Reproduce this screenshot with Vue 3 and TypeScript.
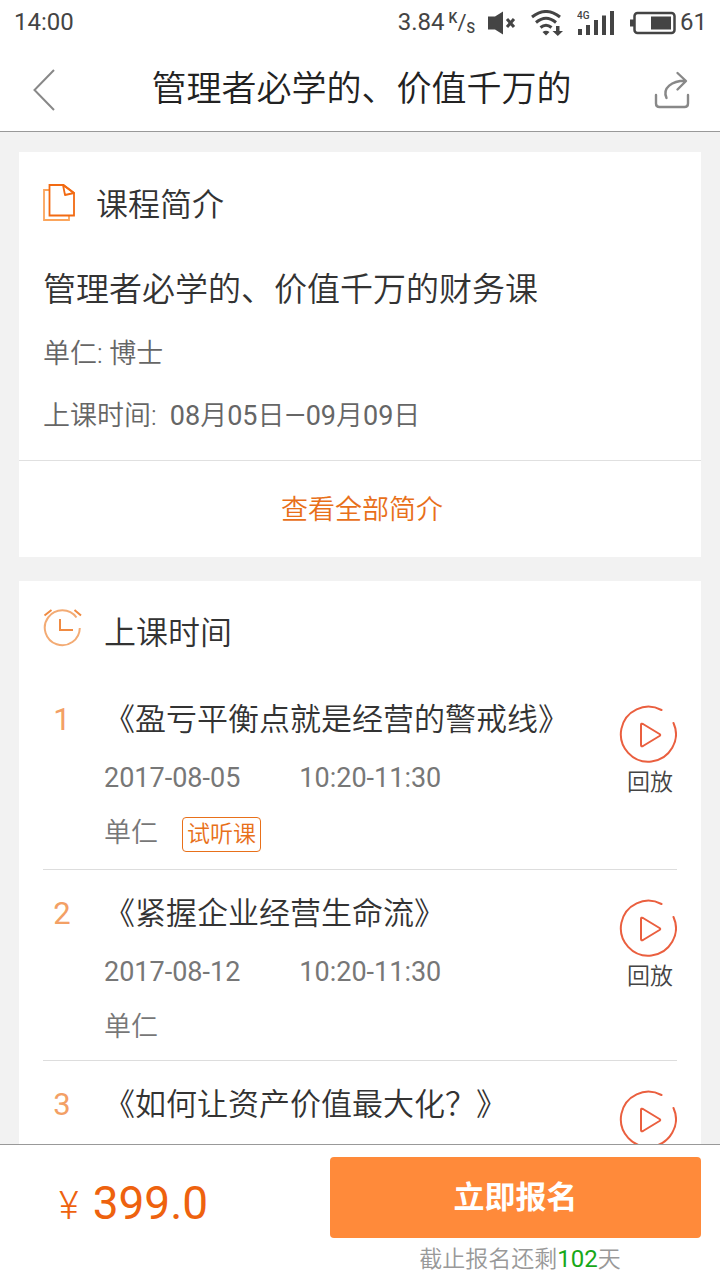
<script setup lang="ts">
interface Lesson {
  id: number
  title: string
  date?: string
  time?: string
  teacher?: string
  trial?: boolean
}

const lessons: Lesson[] = [
  { id: 1, title: '《盈亏平衡点就是经营的警戒线》', date: '2017-08-05', time: '10:20-11:30', teacher: '单仁', trial: true },
  { id: 2, title: '《紧握企业经营生命流》', date: '2017-08-12', time: '10:20-11:30', teacher: '单仁' },
  { id: 3, title: '《如何让资产价值最大化？》' },
]
</script>

<template>
  <div class="screen">
    <div class="status">
      <span>14:00</span>
      <div class="status-right">
        <span>3.84</span>
        <span class="unit"><sup>K</sup><i>/</i><sub>S</sub></span>
        <svg class="mute" width="28" height="24" viewBox="0 0 28 24">
          <path d="M0 5.500h7l8-5v23l-8-5H0z" fill="#444" />
          <path d="M19 8l7 8M26 8l-7 8" stroke="#444" stroke-width="3" />
        </svg>
        <svg class="wifi" width="32" height="26" viewBox="0 0 32 26" fill="none" stroke="#444" stroke-width="3">
          <path d="M1 7q14-11 28 0M5 12.500q10-8.500 20 0M9.500 17.500q5.500-4.500 11 0" />
          <path d="M11.500 22q3.500-2.500 7 0L15 25.500z" fill="#444" stroke="none" />
          <path d="M25 16h3.500v5H32l-5.200 5-5.300-5H25z" fill="#444" stroke="none" />
        </svg>
        <svg class="signal" width="38" height="24" viewBox="0 0 38 24" fill="#444">
          <text x="0" y="8" font-size="10" font-weight="500">4G</text>
          <path d="M1 18h4v6H1zM9 14h4v10H9zM17 9h4v15h-4zM25 4.500h4V24h-4zM33 0h4v24h-4z" />
        </svg>
        <svg class="battery" width="47" height="24" viewBox="0 0 47 24">
          <rect x="4.500" y="2" width="40" height="20" rx="3" fill="none" stroke="#444" stroke-width="2.500" />
          <path d="M0 8.500h4v7H0zM21 5.500h20v13H21z" fill="#444" />
        </svg>
        <span>61</span>
      </div>
    </div>

    <header class="bar">
      <button class="icon-button" type="button" aria-label="返回">
        <svg width="22" height="42" viewBox="0 0 22 42" fill="none" stroke="#888" stroke-width="2">
          <path d="M21 1L1.500 21 21 41" />
        </svg>
      </button>
      <h1>管理者必学的、价值千万的</h1>
      <button class="icon-button" type="button" aria-label="分享">
        <svg width="36" height="38" viewBox="0 0 36 38" fill="none" stroke="#888" stroke-width="2.400" stroke-linecap="round" stroke-linejoin="round">
          <path d="M2 24v8.500q0 3.500 3.500 3.500h25q3.500 0 3.500-3.500V24" />
          <path d="M12.500 27C8 17 18 9.800 31 9.800M23.500 2l8.500 8-8.500 8.500" />
        </svg>
      </button>
    </header>

    <main>
      <section class="card">
        <div class="card-head">
          <svg width="33" height="38" viewBox="0 0 33 38" fill="none" stroke-width="1.800">
            <path d="M6 6H1v30h25v-4.500" stroke="#fba55c" />
            <path d="M6.500 1h14L31 9v22.500H6.500z" stroke="#f26a12" />
            <path d="M20 1l2 10 9-2z" stroke="#f26a12" stroke-linejoin="round" />
          </svg>
          <h2>课程简介</h2>
        </div>
        <h3>管理者必学的、价值千万的财务课</h3>
        <p>单仁: 博士</p>
        <p>上课时间:&nbsp; <b>08</b>月<b>05</b>日<b>—09</b>月<b>09</b>日</p>
        <a class="more" href="#intro">查看全部简介</a>
      </section>

      <section class="card">
        <div class="card-head times">
          <svg width="40" height="40" viewBox="0 0 40 40" fill="none" stroke="#f3ab74" stroke-width="2">
            <path d="M33.500 8.500A17.500 17.500 0 1 0 36.800 19" />
            <path d="M17 10v11h13" stroke="#f08b42" />
            <path d="M1.500 6.500l7-5.500M31.500 1l6.500 5.500" stroke="#f08b42" />
          </svg>
          <h2>上课时间</h2>
        </div>
        <ul>
          <li v-for="lesson in lessons" :key="lesson.id">
            <span class="index">{{ lesson.id }}</span>
            <div class="info">
              <h4>{{ lesson.title }}</h4>
              <div v-if="lesson.date" class="when">
                <time>{{ lesson.date }}</time>
                <time>{{ lesson.time }}</time>
              </div>
              <div v-if="lesson.teacher" class="who">
                <span>{{ lesson.teacher }}</span>
                <span v-if="lesson.trial" class="tag">试听课</span>
              </div>
            </div>
            <button class="replay" type="button">
              <svg width="58" height="58" viewBox="0 0 58 58" fill="none" stroke="#ea5f3f" stroke-width="2" stroke-linejoin="round" stroke-linecap="round">
                <path d="M42.500 5A27.500 27.500 0 1 0 54.500 18" />
                <path d="M22 20v20q0 2 2 1l16.500-10q1.500-1 0-2L24 19q-2-1-2 1z" />
              </svg>
              <span>回放</span>
            </button>
          </li>
        </ul>
      </section>
    </main>

    <footer>
      <div class="price"><span>¥</span>399.0</div>
      <div class="signup">
        <button type="button">立即报名</button>
        <p>截止报名还剩<b>102</b>天</p>
      </div>
    </footer>
  </div>
</template>

<style>
body {
  margin: 0;
}
</style>

<style scoped>
.screen {
  display: flex;
  flex-direction: column;
  height: 100vh;
  background: #f2f2f2;
  color: #333;
  font-family: Roboto, "Noto Sans CJK SC", sans-serif;
  font-weight: 350;
}
h1, h2, h3, h4, p, ul {
  margin: 0;
  padding: 0;
  font-weight: 350;
}
b {
  font-weight: 400;
}
button {
  padding: 0;
  border: 0;
  background: none;
  color: inherit;
  font: inherit;
  cursor: pointer;
}
svg {
  display: block;
  flex: none;
}
.status {
  display: flex;
  justify-content: space-between;
  padding: 0 13px 0 14px;
  background: #fff;
  color: #444;
  font-size: 24px;
  font-weight: 400;
  line-height: 45px;
}
.status-right {
  display: flex;
  align-items: center;
}
.unit {
  display: flex;
  align-items: center;
  margin: 0 13px 0 4px;
  line-height: 20px;
}
.unit sup, .unit sub {
  font-size: 14px;
  font-weight: 500;
}
.unit sup {
  padding-bottom: 10px;
}
.unit sub {
  padding-top: 10px;
}
.unit i {
  font-size: 22px;
  font-style: normal;
}
.wifi {
  margin-left: 15px;
}
.signal {
  margin: 0 15px 0 14px;
}
.battery {
  margin-right: 3px;
}
.bar {
  display: flex;
  align-items: center;
  justify-content: space-between;
  height: 82px;
  padding: 4px 30px 0 33px;
  border-bottom: 1px solid #999;
  background: #fff;
}
.icon-button {
  display: flex;
  width: 36px;
}
.bar h1 {
  color: #222;
  font-size: 35px;
  line-height: 52px;
}
main {
  flex: 1;
  min-height: 0;
  padding: 20px 19px 0;
  overflow-y: auto;
  scrollbar-width: none;
}
.card {
  margin-bottom: 24px;
  padding: 0 24px;
  background: #fff;
}
.card-head {
  display: flex;
  align-items: center;
  gap: 20px;
  height: 102px;
}
.card-head.times {
  height: 95px;
  gap: 21px;
}
.card-head h2 {
  padding-top: 4px;
  font-size: 32px;
  line-height: 48px;
}
.card-head.times h2 {
  padding-top: 8px;
}
.card h3 {
  padding: 12px 0 22px;
  font-size: 33px;
  line-height: 48px;
}
.card p {
  padding-bottom: 26px;
  color: #666;
  font-size: 27px;
  line-height: 36px;
}
.more {
  display: block;
  margin: 0 -24px;
  padding: 2px 0 0 4px;
  border-top: 1px solid #e0e0e0;
  color: #e8701a;
  font-size: 27px;
  line-height: 94px;
  text-align: center;
  text-decoration: none;
}
ul {
  list-style: none;
}
li {
  display: flex;
  align-items: flex-start;
  padding: 23px 0 15px;
  border-bottom: 1px solid #ddd;
}
.index {
  width: 38px;
  margin-right: 23px;
  color: #f3a065;
  font-size: 31px;
  font-weight: 400;
  line-height: 42px;
  text-align: center;
}
.info {
  flex: 1;
}
.info h4 {
  margin-bottom: 19px;
  font-size: 31px;
  line-height: 42px;
}
.when, .who {
  display: flex;
  color: #777;
  font-size: 27px;
  line-height: 36px;
}
.when {
  gap: 59px;
  margin-bottom: 19px;
  font-weight: 400;
}
.who {
  gap: 24px;
}
.tag {
  margin: 2px 0;
  padding: 0 4px;
  border: 1px solid #e8701a;
  border-radius: 4px;
  color: #e8701a;
  font-size: 23px;
  line-height: 33px;
}
.replay {
  display: flex;
  flex-direction: column;
  align-items: center;
  gap: 3px;
  margin-top: 6px;
  color: #444;
  font-size: 23px;
  line-height: 34px;
}
.replay span {
  padding-left: 4px;
}
footer {
  display: grid;
  grid-template-columns: 330fr 371fr;
  padding: 12px 19px 1px 0;
  border-top: 1px solid #999;
  background: #fff;
}
.price {
  display: flex;
  align-items: baseline;
  gap: 14px;
  padding: 18px 0 0 59px;
  color: #ee620e;
  font-size: 46px;
  font-weight: 400;
  line-height: 56px;
}
.price span {
  font-size: 38px;
  font-weight: 350;
}
.signup button {
  display: block;
  width: 100%;
  border-radius: 4px;
  background: #ff8a3a;
  color: #fff;
  font-size: 31px;
  font-weight: 700;
  line-height: 81px;
}
.signup p {
  padding: 2px 0 0 9px;
  color: #999;
  font-size: 23px;
  line-height: 38px;
  text-align: center;
}
.signup b {
  color: #18a818;
  font-size: 24px;
}
</style>
